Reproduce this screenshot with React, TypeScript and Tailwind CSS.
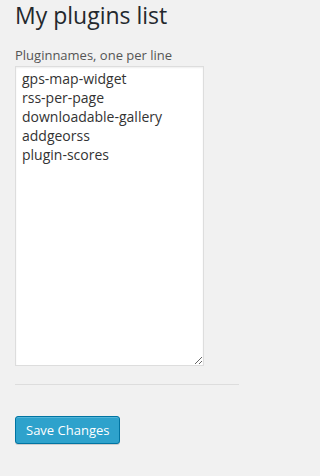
import React from "react";

export default function App() {
  return (
    <div className="min-h-[476px] w-full bg-[#f1f1f1] text-[#444]" style={{ fontFamily: '"Open Sans", sans-serif' }}>
      <div className="w-[239px] pl-[15px] pt-[1px]">
        <h2 className="m-0 text-[23px] font-normal leading-[29px] text-[#23282d]">My plugins list</h2>
        <label className="mt-[16px] block text-[13px] leading-[19px] text-[#555]">Pluginnames, one per line</label>
        <textarea
          className="mt-[1px] block h-[300px] w-[189px] border border-[#ddd] bg-white px-[6px] py-[2px] text-[14px] leading-[19px] text-[#333] shadow-[inset_0_1px_2px_rgba(0,0,0,0.07)] outline-none"
          style={{ fontFamily: '"Open Sans", sans-serif' }}
          defaultValue={"gps-map-widget\nrss-per-page\ndownloadable-gallery\naddgeorss\nplugin-scores"}
        />
        <div className="mt-[18px] h-0 border-t border-[#ddd]" />
        <button className="mt-[31px] h-[28px] rounded-[3px] border border-[#0074a2] bg-[#2ea2cc] px-[10px] pb-[1px] text-[13px] leading-[26px] text-white shadow-[inset_0_1px_0_rgba(120,200,230,0.5),0_1px_0_rgba(0,0,0,0.15)]">
          Save Changes
        </button>
      </div>
    </div>
  );
}
